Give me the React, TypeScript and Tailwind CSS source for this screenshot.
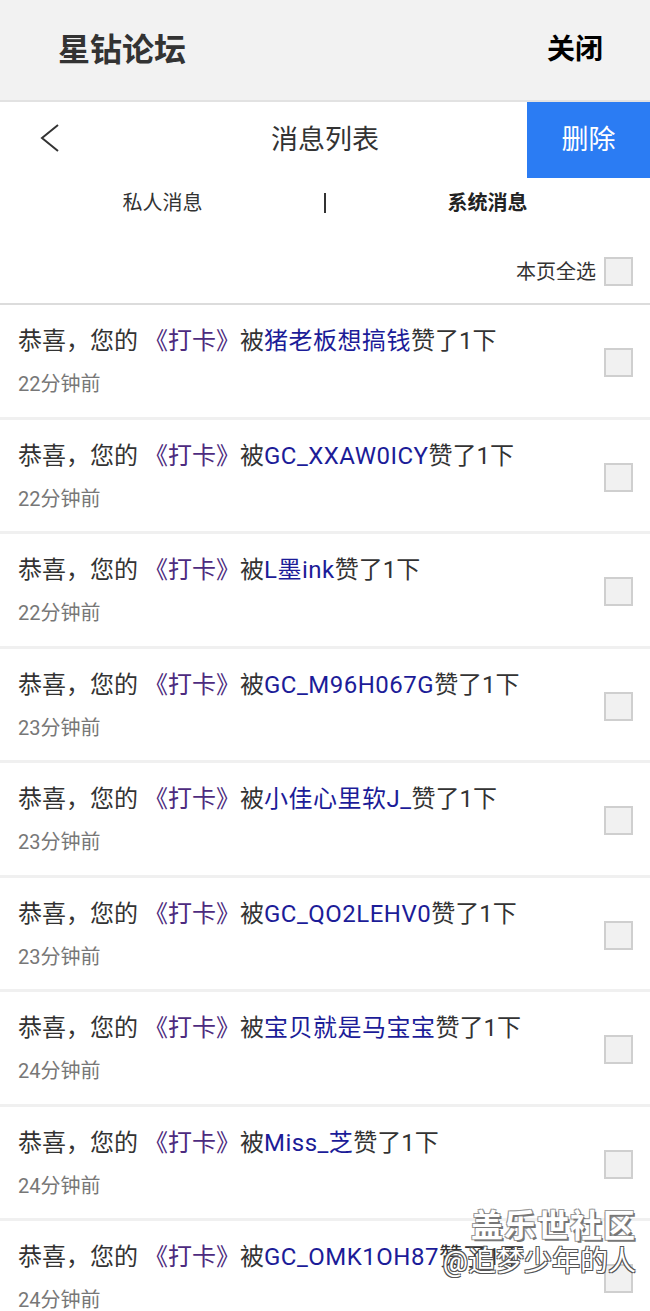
type Msg = { user: string; time: string }

const MESSAGES: Msg[] = [
  { user: '猪老板想搞钱', time: '22分钟前' },
  { user: 'GC_XXAW0ICY', time: '22分钟前' },
  { user: 'L墨ink', time: '22分钟前' },
  { user: 'GC_M96H067G', time: '23分钟前' },
  { user: '小佳心里软J_', time: '23分钟前' },
  { user: 'GC_QO2LEHV0', time: '23分钟前' },
  { user: '宝贝就是马宝宝', time: '24分钟前' },
  { user: 'Miss_芝', time: '24分钟前' },
  { user: 'GC_OMK1OH87', time: '24分钟前' },
]

function Box() {
  return <div className="w-[29px] h-[29px] border-2 border-[#cfcfcf] bg-[#f1f1f1] shrink-0" />
}

export default function App() {
  return (
    <div className="relative w-[650px] h-[1311px] overflow-hidden bg-white font-['Roboto','Noto_Sans_CJK_SC',sans-serif] text-[#333]">
      {/* top bar */}
      <div className="h-[102px] bg-[#f2f2f2] border-b-2 border-[#e2e2e2] flex items-center justify-between pl-[58px] pr-[47px]">
        <span className="text-[32px] font-bold text-[#333] leading-none">星钻论坛</span>
        <span className="text-[28px] font-bold text-black leading-none">关闭</span>
      </div>

      {/* nav */}
      <div className="relative h-[76px] flex items-center justify-center">
        <svg className="absolute left-[38px] top-[20px] w-[24px] h-[32px]" viewBox="0 0 24 32" fill="none" stroke="#333" strokeWidth="2">
          <polyline points="20,3 4,16 20,29" />
        </svg>
        <span className="text-[27px] text-[#333]">消息列表</span>
        <button className="absolute right-0 top-0 w-[123px] h-[76px] bg-[#2b7cf3] text-white text-[27px]">删除</button>
      </div>

      {/* tabs */}
      <div className="grid grid-cols-2 relative h-[50px] items-center">
        <span className="text-center text-[20px] text-[#333]">私人消息</span>
        <span className="text-center text-[20px] font-bold text-[#222]">系统消息</span>
        <span className="absolute left-[324px] top-[15px] w-[2px] h-[20px] bg-[#333]" />
      </div>

      {/* select all */}
      <div className="h-[77px] flex items-center justify-end gap-[8px] pr-[17px] pt-[12px] border-b-2 border-[#dcdcdc]">
        <span className="text-[20px] text-[#333]">本页全选</span>
        <Box />
      </div>

      {/* list */}
      <div>
        {MESSAGES.map((m, i) => (
          <div key={i} className="h-[114.5px] flex items-center justify-between pl-[18px] pr-[17px] border-b-[3px] border-[#f0f0f0]">
            <div className="flex flex-col pt-[2px]">
              <p className="text-[24px] leading-[30px] text-[#333] whitespace-nowrap">
                恭喜，您的&nbsp;<span className="text-[#4d2b7e]">《打卡》</span>被<span className="text-[#1c1c98] tracking-[0.5px]">{m.user}</span>赞了1下
              </p>
              <p className="text-[20px] leading-[26px] text-[#777] mt-[15px]">{m.time}</p>
            </div>
            <div className="mt-[4px]"><Box /></div>
          </div>
        ))}
      </div>

      {/* watermark */}
      <div className="absolute right-[14px] top-[1210px] flex flex-col items-end leading-none pointer-events-none">
        <span className="text-[32px] font-bold text-white tracking-[1px] [text-shadow:2px_2px_0_#777,-1px_-1px_0_#999,1px_-1px_0_#999,-1px_1px_0_#999]">盖乐世社区</span>
        <span className="mt-[6px] text-[28px] text-white [text-shadow:1px_1px_0_#555,-1px_-1px_0_#555,1px_-1px_0_#555,-1px_1px_0_#555]">@追梦少年的人</span>
      </div>
    </div>
  )
}
